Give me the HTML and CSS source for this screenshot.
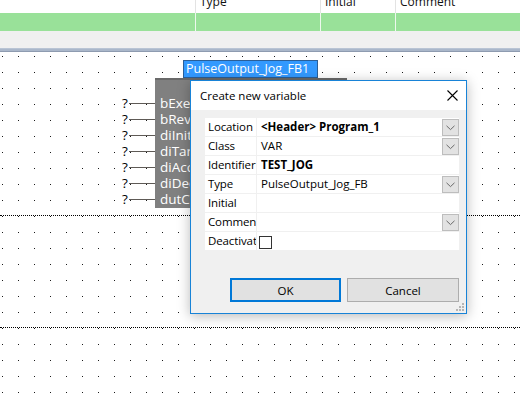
FILE: index.html
```
<!DOCTYPE html>
<html>
<head>
<meta charset="utf-8">
<link rel="stylesheet" href="styles.css">
</head>
<body>
<div class="app">
  <div class="vtable">
    <div class="vrow vhead">
      <div class="vc c1"></div>
      <div class="vc"><span class="htext">Type</span></div>
      <div class="vc"><span class="htext">Initial</span></div>
      <div class="vc"><span class="htext">Comment</span></div>
    </div>
    <div class="vrow vgreen">
      <div class="vc c1"></div>
      <div class="vc"></div>
      <div class="vc"></div>
      <div class="vc"></div>
    </div>
    <div class="vtool"></div>
  </div>
  <div class="splitter"></div>
  <div class="canvas">
    <div class="network n1">
      <div class="inst">PulseOutput_Jog_FB1</div>
      <div class="fb">
        <div class="fb-type">PulseOutput_Jog_FB</div>
        <div class="pins">
          <div class="pin"><span class="q">?</span><span class="wire"></span><span class="pname">bExecute</span></div>
          <div class="pin"><span class="q">?</span><span class="wire"></span><span class="pname">bReverse</span></div>
          <div class="pin"><span class="q">?</span><span class="wire"></span><span class="pname">diInitial</span></div>
          <div class="pin"><span class="q">?</span><span class="wire"></span><span class="pname">diTarget</span></div>
          <div class="pin"><span class="q">?</span><span class="wire"></span><span class="pname">diAccel</span></div>
          <div class="pin"><span class="q">?</span><span class="wire"></span><span class="pname">diDecel</span></div>
          <div class="pin"><span class="q">?</span><span class="wire"></span><span class="pname">dutChannel</span></div>
        </div>
      </div>
    </div>
    <div class="network n2"></div>
    <div class="network n3"></div>
  </div>

  <div class="dialog">
    <div class="dlg-title">
      <span>Create new variable</span>
      <svg class="close" width="11" height="11" viewBox="0 0 11 11"><path d="M0.5 0.5 L10.5 10.5 M10.5 0.5 L0.5 10.5" stroke="#000" stroke-width="1.1" fill="none"/></svg>
    </div>
    <div class="dlg-body">
      <div class="pgrid">
        <div class="pl">Location</div>
        <div class="pv"><b>&lt;Header&gt; Program_1</b><span class="dd"><svg width="9" height="6" viewBox="0 0 9 6"><path d="M0.5 0.8 L4.5 4.6 L8.5 0.8" stroke="#6a6a6a" fill="none"/></svg></span></div>
        <div class="pl">Class</div>
        <div class="pv"><span>VAR</span><span class="dd"><svg width="9" height="6" viewBox="0 0 9 6"><path d="M0.5 0.8 L4.5 4.6 L8.5 0.8" stroke="#6a6a6a" fill="none"/></svg></span></div>
        <div class="pl">Identifier</div>
        <div class="pv"><b>TEST_JOG</b></div>
        <div class="pl">Type</div>
        <div class="pv"><span>PulseOutput_Jog_FB</span><span class="dd"><svg width="9" height="6" viewBox="0 0 9 6"><path d="M0.5 0.8 L4.5 4.6 L8.5 0.8" stroke="#6a6a6a" fill="none"/></svg></span></div>
        <div class="pl">Initial</div>
        <div class="pv"></div>
        <div class="pl">Comment</div>
        <div class="pv"><span></span><span class="dd"><svg width="9" height="6" viewBox="0 0 9 6"><path d="M0.5 0.8 L4.5 4.6 L8.5 0.8" stroke="#6a6a6a" fill="none"/></svg></span></div>
        <div class="pl">Deactivated</div>
        <div class="pv pcheck"><span class="chk"></span></div>
      </div>
      <div class="btns">
        <button class="btn ok">OK</button>
        <button class="btn">Cancel</button>
      </div>
    </div>
    <svg class="grip" width="9" height="9" viewBox="0 0 9 9">
      <g fill="#b5b5b5">
        <rect x="7" y="1" width="2" height="2"/>
        <rect x="4" y="4" width="2" height="2"/><rect x="7" y="4" width="2" height="2"/>
        <rect x="1" y="7" width="2" height="2"/><rect x="4" y="7" width="2" height="2"/><rect x="7" y="7" width="2" height="2"/>
      </g>
    </svg>
  </div>
</div>
</body>
</html>
```

FILE: styles.css
```
* { box-sizing: border-box; }
html, body { margin: 0; padding: 0; }
body {
  width: 520px;
  height: 401px;
  overflow: hidden;
  font-family: "Open Sans", "Noto Sans", "Liberation Sans", sans-serif;
  font-size: 11.5px;
  color: #000;
  background: #fff;
}
.app {
  position: relative;
  width: 520px;
  height: 401px;
  display: flex;
  flex-direction: column;
  overflow: hidden;
}

/* variable table at top */
.vrow {
  display: grid;
  grid-template-columns: 195px 125px 75px 1fr;
}
.vhead { height: 13px; background: #fff; overflow: hidden; }
.vhead .vc { border-left: 1px solid #e3e3e3; padding-left: 4px; overflow: hidden; }
.vhead .vc.c1 { border-left: 0; }
.htext { display: block; line-height: 12px; margin-top: -4px; font-size: 12px; color: #111; }
.vgreen { height: 18px; background: #99e199; }
.vgreen .vc { border-left: 1px solid #eef8ee; }
.vgreen .vc.c1 { border-left: 0; }
.vtool { height: 17px; background: #f0f0f0; }
.splitter {
  height: 4px;
  background: #aab7ca;
  border-top: 1px solid #b9c4d4;
  border-bottom: 1px solid #8e9bb0;
}

/* FBD canvas */
.canvas {
  flex: 1;
  display: flex;
  flex-direction: column;
  background-color: #fff;
  background-image: conic-gradient(at 1px 1px, transparent 75%, #1a1a1a 0);
  background-size: 16px 16px;
  background-position: 2px 4px;
}
.network { position: relative; border-bottom: 1px dotted #000; }
.n1 { height: 164px; }
.n2 { height: 112px; }
.n3 { flex: 1; border-bottom: 0; }

.inst {
  position: absolute;
  left: 183px;
  top: 8px;
  width: 135px;
  height: 18px;
  background: #3399ff;
  border: 1px solid #2b5f98;
  color: #fff;
  font-size: 12.5px;
  line-height: 16px;
  padding-left: 2px;
  white-space: nowrap;
  z-index: 2;
}
.fb {
  position: absolute;
  left: 155px;
  top: 26px;
  width: 192px;
  height: 130px;
  background: #808080;
  border-top: 2px solid #6a6a6a;
}
.fb-type {
  text-align: center;
  color: #fff;
  font-size: 13px;
  line-height: 14px;
  padding-top: 1px;
  padding-left: 2px;
  white-space: nowrap;
}
.pins {
  position: absolute;
  left: -37px;
  top: 15px;
  display: flex;
  flex-direction: column;
}
.pin {
  height: 16px;
  display: flex;
  align-items: center;
  white-space: nowrap;
}
.q {
  width: 11px;
  padding-left: 4px;
  font-size: 13.5px;
  line-height: 16px;
  color: #000;
}
.wire {
  width: 26px;
  height: 1px;
  background: #5e5a56;
}
.pname {
  padding-left: 5px;
  color: #fff;
  font-size: 13.5px;
  line-height: 16px;
}

/* dialog */
.dialog {
  position: absolute;
  left: 190px;
  top: 80px;
  width: 277px;
  height: 234px;
  border: 1px solid #1883d7;
  background: #f0f0f0;
  box-shadow: 0 2px 12px rgba(0, 0, 0, 0.28);
  display: flex;
  flex-direction: column;
  z-index: 5;
}
.dlg-title {
  height: 29px;
  background: #fff;
  display: flex;
  align-items: center;
  justify-content: space-between;
  padding: 0 8px 0 9px;
  font-size: 11.5px;
}
.close { display: block; margin-top: 0px; }
.dlg-body {
  flex: 1;
  padding: 8px 7px 0 14px;
}
.pgrid {
  display: grid;
  grid-template-columns: 51px 1fr;
  grid-auto-rows: 18px;
  gap: 1px;
  background: #f0f0f0;
}
.pl {
  background: #fff;
  padding-left: 3px;
  line-height: 18px;
  letter-spacing: -0.12px;
  white-space: nowrap;
  overflow: hidden;
}
.pv {
  background: #fff;
  padding-left: 4px;
  line-height: 18px;
  white-space: nowrap;
  display: flex;
  justify-content: space-between;
  align-items: flex-start;
}
.pv b { font-weight: 700; }
.dd {
  width: 17px;
  height: 17px;
  margin-top: 1px;
  background: #e2e2e2;
  border: 1px solid #bdbdbd;
  display: flex;
  align-items: center;
  justify-content: center;
}
.dd svg { display: block; }
.pcheck { align-items: center; padding-left: 2px; }
.chk {
  width: 13px;
  height: 13px;
  border: 1px solid #333;
  background: #fff;
  margin-top: 2px;
}
.btns {
  display: flex;
  justify-content: flex-end;
  gap: 6px;
  margin-top: 28px;
}
.btn {
  width: 111px;
  height: 24px;
  font-family: inherit;
  font-size: 11.5px;
  color: #000;
  background: #e1e1e1;
  border: 1px solid #adadad;
  padding: 0;
  margin: 0;
}
.btn.ok { border: 2px solid #0078d7; width: 111px; }
.btn + .btn { width: 112px; }
.grip {
  position: absolute;
  right: 2px;
  bottom: 2px;
}
```
